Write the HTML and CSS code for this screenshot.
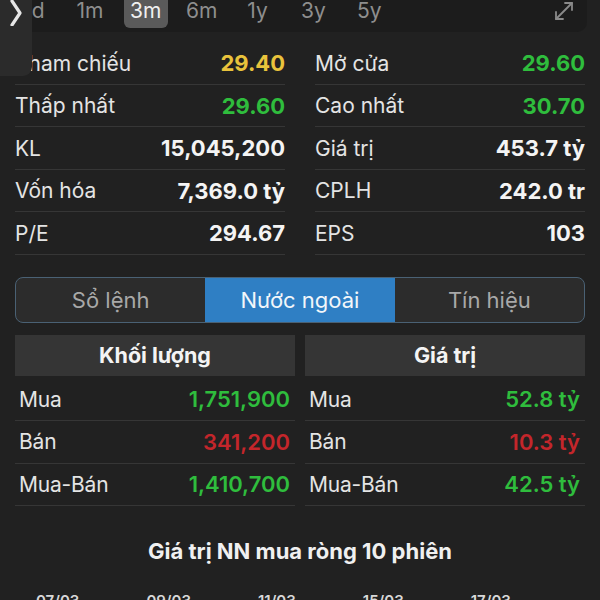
FILE: index.html
```html
<!DOCTYPE html>
<html lang="vi">
<head>
<meta charset="utf-8">
<title>Chi tiết cổ phiếu</title>
<link rel="stylesheet" href="styles.css">
</head>
<body>
<div class="screen">
  <div class="sidetab">
    <svg width="14" height="26" viewBox="0 0 14 26"><path d="M3 1 L11 13 L3 25" fill="none" stroke="#e6e6e6" stroke-width="3.2" stroke-linecap="round" stroke-linejoin="round"/></svg>
  </div>
  <div class="topbar">
    <div class="ranges">
      <span class="rg">1d</span>
      <span class="rg">1m</span>
      <span class="rg active">3m</span>
      <span class="rg">6m</span>
      <span class="rg">1y</span>
      <span class="rg">3y</span>
      <span class="rg">5y</span>
    </div>
    <svg class="expand" width="22" height="22" viewBox="0 0 22 22"><g fill="none" stroke="#8a8a8a" stroke-width="1.8" stroke-linecap="round" stroke-linejoin="round"><path d="M3 19 L19 3"/><path d="M12 3 L19 3 L19 10"/><path d="M3 12 L3 19 L10 19"/></g></svg>
  </div>

  <div class="stats">
    <div class="col">
      <div class="row"><span class="lbl">Tham chiếu</span><span class="val yellow">29.40</span></div>
      <div class="row"><span class="lbl">Thấp nhất</span><span class="val green">29.60</span></div>
      <div class="row"><span class="lbl">KL</span><span class="val">15,045,200</span></div>
      <div class="row"><span class="lbl">Vốn hóa</span><span class="val">7,369.0 tỷ</span></div>
      <div class="row"><span class="lbl">P/E</span><span class="val">294.67</span></div>
    </div>
    <div class="col">
      <div class="row"><span class="lbl">Mở cửa</span><span class="val green">29.60</span></div>
      <div class="row"><span class="lbl">Cao nhất</span><span class="val green">30.70</span></div>
      <div class="row"><span class="lbl">Giá trị</span><span class="val">453.7 tỷ</span></div>
      <div class="row"><span class="lbl">CPLH</span><span class="val">242.0 tr</span></div>
      <div class="row"><span class="lbl">EPS</span><span class="val">103</span></div>
    </div>
  </div>

  <div class="segment">
    <div class="seg">Sổ lệnh</div>
    <div class="seg on">Nước ngoài</div>
    <div class="seg">Tín hiệu</div>
  </div>

  <div class="foreign">
    <div class="fcol">
      <div class="fhead">Khối lượng</div>
      <div class="frow"><span class="lbl">Mua</span><span class="fval green">1,751,900</span></div>
      <div class="frow"><span class="lbl">Bán</span><span class="fval red">341,200</span></div>
      <div class="frow"><span class="lbl">Mua-Bán</span><span class="fval green">1,410,700</span></div>
    </div>
    <div class="fcol">
      <div class="fhead">Giá trị</div>
      <div class="frow"><span class="lbl">Mua</span><span class="fval green">52.8 tỷ</span></div>
      <div class="frow"><span class="lbl">Bán</span><span class="fval red">10.3 tỷ</span></div>
      <div class="frow"><span class="lbl">Mua-Bán</span><span class="fval green">42.5 tỷ</span></div>
    </div>
  </div>

  <div class="chart-title">Giá trị NN mua ròng 10 phiên</div>
  <div class="axis">
    <span>07/03</span><span>09/03</span><span>11/03</span><span>15/03</span><span>17/03</span>
  </div>
</div>
</body>
</html>
```

FILE: styles.css
```css
html, body {
  margin: 0;
  padding: 0;
  background: #212121;
}
body {
  font-family: Inter, "Noto Sans", "Liberation Sans", sans-serif;
  color: #e8e8e8;
  width: 600px;
  height: 600px;
  overflow: hidden;
}
.screen {
  position: relative;
  width: 600px;
  height: 600px;
  overflow: hidden;
}
.sidetab {
  position: absolute;
  left: 0;
  top: 0;
  width: 32px;
  height: 76px;
  background: #2b2b2b;
  border-bottom-right-radius: 9px;
  display: flex;
  justify-content: flex-start;
  padding-left: 9px;
  box-sizing: border-box;
  z-index: 2;
}
.topbar {
  height: 32px;
  width: 587px;
  background: #1c1c1c;
  border-bottom-right-radius: 10px;
  display: flex;
  align-items: flex-start;
  justify-content: space-between;
  box-sizing: border-box;
  padding-right: 12px;
}
.ranges {
  display: flex;
  align-items: flex-start;
  gap: 11.9px;
  padding-left: 12px;
}
.rg {
  width: 44px;
  text-align: center;
  font-size: 21px;
  color: #8e8e8e;
  height: 28px;
  line-height: 22px;
  border-radius: 0 0 6px 6px;
}
.rg.active {
  background: #5a5a5a;
  color: #f0f0f0;
}
.stats {
  display: grid;
  grid-template-columns: 270px 270px;
  column-gap: 30px;
  padding: 10px 15px 0 15px;
}
.row {
  height: 42.5px;
  box-sizing: border-box;
  border-bottom: 1px solid #363636;
  display: flex;
  align-items: center;
  justify-content: space-between;
  padding-top: 1px;
}
.lbl {
  font-size: 21px;
  color: #e4e4e4;
}
.val {
  font-size: 22px;
  font-weight: 700;
  color: #f4f4f4;
}
.yellow { color: #e9c33c; }
.green { color: #2fbd3d; }
.red { color: #c4262b; }
.segment {
  margin: 22px 15px 0 15px;
  height: 46px;
  box-sizing: border-box;
  border: 1.5px solid #4a6174;
  border-radius: 8px;
  background: #2c2c2c;
  display: grid;
  grid-template-columns: 1fr 1fr 1fr;
  overflow: hidden;
}
.seg {
  display: flex;
  align-items: center;
  justify-content: center;
  font-size: 22px;
  color: #a8a8a8;
}
.seg.on {
  background: #2f7fc4;
  color: #f2f6fa;
}
.foreign {
  display: grid;
  grid-template-columns: 280px 280px;
  column-gap: 10px;
  padding: 12px 15px 0 15px;
}
.fhead {
  height: 41px;
  background: #353535;
  display: flex;
  align-items: center;
  justify-content: center;
  font-size: 21.5px;
  font-weight: 700;
  color: #f4f4f4;
  margin-bottom: 3px;
}
.frow {
  height: 42.5px;
  box-sizing: border-box;
  border-bottom: 1px solid #363636;
  display: flex;
  align-items: center;
  justify-content: space-between;
  padding: 0 5px 0 4px;
}
.frow .lbl {
  letter-spacing: -0.2px;
}
.fval {
  font-size: 22px;
  font-weight: 600;
}
.chart-title {
  margin-top: 32px;
  text-align: center;
  font-size: 22px;
  font-weight: 700;
  color: #f0f0f0;
}
.axis {
  display: flex;
  gap: 67px;
  padding-left: 36px;
  margin-top: 27px;
  font-size: 15px;
  font-weight: 600;
  color: #d8d8d8;
}
```
